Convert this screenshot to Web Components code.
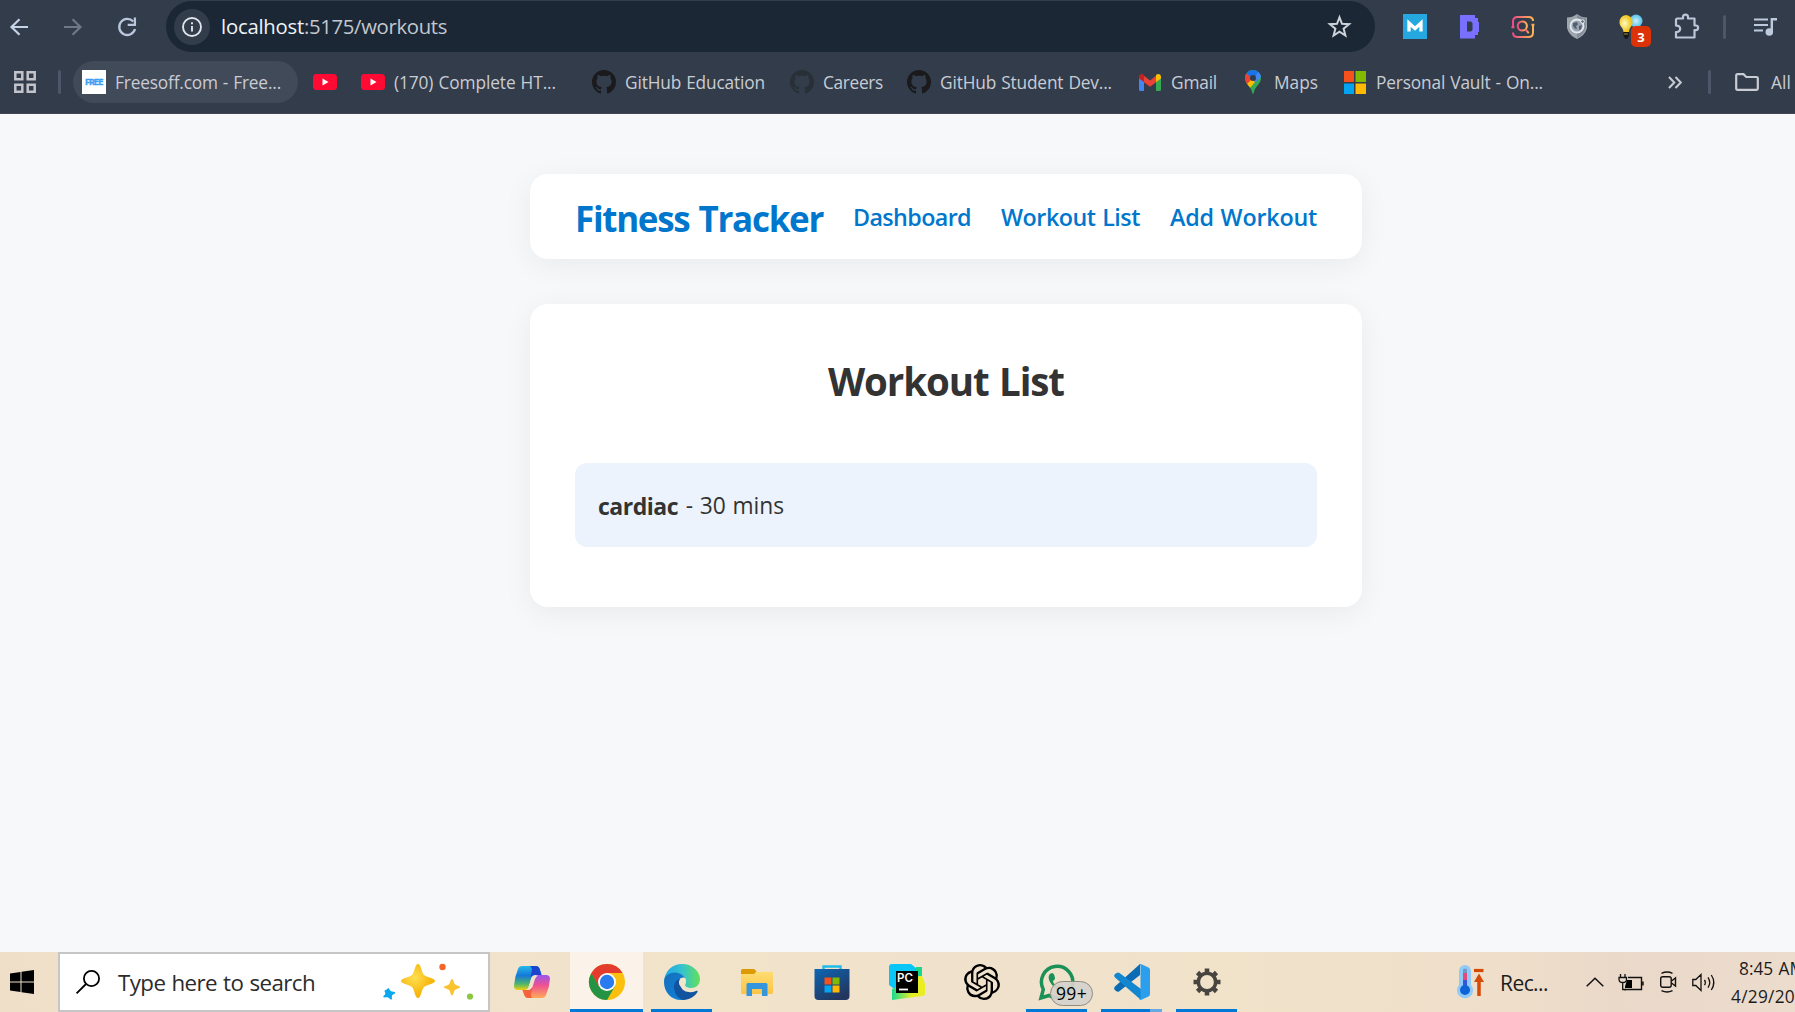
<!DOCTYPE html>
<html lang="en">
<head>
<meta charset="utf-8">
<title>Fitness Tracker</title>
<style>
html,body{margin:0;height:100%;overflow:hidden;background:#f6f8fa}
body{font-family:"Open Sans","Noto Sans",sans-serif}
</style>
</head>
<body>
<desktop-screen></desktop-screen>
<script>
const GH='<path fill="currentColor" d="M12 0C5.37 0 0 5.37 0 12c0 5.31 3.435 9.795 8.205 11.385.6.105.825-.255.825-.57 0-.285-.015-1.23-.015-2.235-3.015.555-3.795-.735-4.035-1.41-.135-.345-.72-1.41-1.23-1.695-.42-.225-1.02-.78-.015-.795.945-.015 1.62.87 1.845 1.23 1.08 1.815 2.805 1.305 3.495.99.105-.78.42-1.305.765-1.605-2.67-.3-5.46-1.335-5.46-5.925 0-1.305.465-2.385 1.23-3.225-.12-.3-.54-1.53.12-3.18 0 0 1.005-.315 3.3 1.23.96-.27 1.98-.405 3-.405s2.04.135 3 .405c2.295-1.56 3.3-1.23 3.3-1.23.66 1.65.24 2.88.12 3.18.765.84 1.23 1.905 1.23 3.225 0 4.605-2.805 5.625-5.475 5.925.435.375.81 1.095.81 2.22 0 1.605-.015 2.895-.015 3.3 0 .315.225.69.825.57A12.02 12.02 0 0 0 24 12c0-6.63-5.37-12-12-12z"/>';
/* name: [width, height, markup] */
const ICONS={
back:[18,18,'<path d="M18 9H2M9.5 1.2 1.5 9l8 7.8" fill="none" stroke="#c6d2e6" stroke-width="2.2"/>'],
forward:[18,18,'<path d="M0 9h16M8.5 1.2l8 7.8-8 7.8" fill="none" stroke="#6f7885" stroke-width="2.2"/>'],
reload:[20,20,'<path d="M16.2 4.6A8 8 0 1 0 18 12" fill="none" stroke="#b9c6dc" stroke-width="2.3"/><path d="M17.9.5v7.3h-7.2" fill="none" stroke="#b9c6dc" stroke-width="2.3"/>'],
info:[36,36,'<circle cx="18" cy="18" r="18" fill="#323c4b"/><circle cx="18" cy="18" r="9" fill="none" stroke="#dfe3ec" stroke-width="1.9"/><path d="M18 17v5.6M18 13.2v2" stroke="#dfe3ec" stroke-width="1.9"/>'],
star:[23,23,'<path d="m11.5 2.3 2.5 6.5 7.1.4-5.5 4.4 1.8 7-5.9-3.9-5.9 3.9 1.8-7L1.900 9.2l7.100-.4z" fill="none" stroke="#ced2d9" stroke-width="2"/>'],
mext:[24,25,'<path fill="#25a8df" d="M0 0h24v25H0z"/><path d="M6 17.500V9l6 5.500L18 9v8.500" fill="none" stroke="#fff" stroke-width="3.300"/>'],
dext:[19,25,'<path fill="#7a70ff" fill-rule="evenodd" d="M1.500 1H15v3h3v4h1v10h-1v3h-3v3.500H0V1zM7 7.500v10h4l1.500-1.500V9L11 7.500z"/>'],
lens:[24,24,'<defs><linearGradient id="g"><stop stop-color="#ee4c82"/><stop offset="1" stop-color="#fbb652"/></linearGradient></defs><g fill="none" stroke="url(#g)" stroke-width="2"><path d="M2 12V6.500Q2 2 6.500 2h11Q22 2 22 6M22 10v7.500q0 4.500-4.500 4.500h-11Q2 22 2 17.500"/><path d="M.4 12.300h3M20.400 9.800h3"/><circle cx="11.300" cy="11" r="4.600"/><path d="m14.500 14.500 3.200 3.700"/></g>'],
shield:[20,25,'<path d="M10 0q4.500 3.500 10 3.500V14q-2 7.500-10 11Q2 21.500 0 14V3.500Q5.500 3.500 10 0z" fill="#9da5ad"/><path d="M10 1v23q7.500-4 9-11V4.500Q14 4 10 1z" fill="#858e98"/><circle cx="10" cy="12" r="6.500" fill="#9aa3b0" stroke="#e2e8f0" stroke-width="1.800"/><path d="m6 9 4-1 1 2.500-2 1.500 1 3-2-.5-2-2.500zM12 12l3-1-1 4-2 1z" fill="#525f6f"/><circle cx="15.500" cy="7.500" r="1.800" fill="#637080" stroke="#fff" stroke-width=".8"/>'],
bulb:[34,34,'<defs><radialGradient id="a" cx=".4"><stop stop-color="#fffbc4"/><stop offset="1" stop-color="#f2c51c"/></radialGradient><radialGradient id="b"><stop stop-color="#c7f2ff"/><stop offset="1" stop-color="#5abde5"/></radialGradient></defs><circle cx="17" cy="7" r="6.500" fill="url(#b)"/><path d="M7 1a6.800 7 0 0 1 6.500 8c-.5 4-3 4-3.500 9H4.500C4 13 1 13 .5 9A6.800 7 0 0 1 7 1z" fill="url(#a)"/><path d="M4.500 18H10v4l-2 3H6.500l-2-3z" fill="#171717"/><path d="M5 20h4" stroke="#a98e35"/>'],
puzzle:[25,26,'<path d="M3 5.500h6V4.200a2.500 2.500 0 0 1 5 0v1.300h6.500v7h1.300a2.300 2.300 0 0 1 0 4.600h-1.300V24.500H2V19h1a3.200 3.200 0 0 0 0-6.400H2V6.500z" fill="none" stroke="#bcc6d9" stroke-width="2.200" stroke-linejoin="round"/>'],
music:[23,18,'<path d="M0 1.500h14M0 7h14M0 12.500h9" stroke="#bdc9dd" stroke-width="2.200"/><path d="M17.800 14V1.300H23" fill="none" stroke="#bdc9dd" stroke-width="2.400"/><circle cx="15.300" cy="14" r="3.800" fill="#bdc9dd"/>'],
apps:[22,22,'<g fill="none" stroke="#c3c4ca" stroke-width="2.500"><path d="M1.300 1.300h7v7h-7zM13.700 1.300h7v7h-7zM1.300 13.700h7v7h-7zM13.700 13.700h7v7h-7z"/></g>'],
sep:[3,24,'<rect width="3" height="24" rx="1.500" fill="#4c586a"/>'],
yt:[24,16,'<rect width="24" height="16" rx="3.500" fill="#ff0a33"/><path fill="#fff" d="m9.500 4.500 6 3.500-6 3.500z"/>'],
gh:[24,24,GH],
gmail:[22,17,'<path fill="#4285f4" d="M0 3h5v14H1.500Q0 17 0 15.500z"/><path fill="#34a853" d="M17 3h5v12.500q0 1.500-1.500 1.500H17z"/><path fill="#ea4335" d="m4 1 7 5.500L18 1v6.500l-7 5.300-7-5.300z"/><path fill="#c5221f" d="M0 3C0 0 3-.8 5 .9V8L0 4.500z"/><path fill="#fbbc04" d="M22 3c0-3-3-3.800-5-2.100V8l5-3.500z"/>'],
maps:[16,24,'<defs><clipPath id="p"><path d="M8 0a8 8 0 0 1 8 8c0 6-6 8-7.300 15q-.7 2-1.400 0C6 16 0 14 0 8a8 8 0 0 1 8-8z"/></clipPath></defs><g clip-path="url(#p)"><path fill="#34a853" d="M0 0h16v24H0z"/><path fill="#fbbc04" d="M0 14 8 5l4 5-8 9H0z"/><path fill="#ea4335" d="M0 3 8 8l-7 7-3-5z"/><path fill="#4285f4" d="M8 8 14 0l4 5-8 8z"/><path fill="#1a73e8" d="M1 3Q7-4 14 1L8 9z"/></g><circle cx="8" cy="8" r="3" fill="#323c4b"/>'],
ms:[22,23,'<path fill="#f6511d" d="M0 0h10v11H0z"/><path fill="#80bb01" d="M11.500 0H22v11H11.500z"/><path fill="#02a4ef" d="M0 12.500h10V23H0z"/><path fill="#ffb901" d="M11.500 12.500H22V23H11.500z"/>'],
more:[14,13,'<path d="m1 1 5.300 5.500L1 12M7.500 1l5.300 5.500L7.500 12" fill="none" stroke="#c9ccd3" stroke-width="2"/>'],
folder:[24,18,'<path d="M1.200 2.500q0-1.300 1.300-1.300h6L11.300 4h10.200q1.300 0 1.300 1.300v10.200q0 1.300-1.300 1.300h-19q-1.300 0-1.300-1.300z" fill="none" stroke="#c9ccd3" stroke-width="2.200"/>'],
win:[24,24,'<path d="M0 3.400 10.500 2v9.500H0zM11.500 1.800 24 0v11.500H11.500zM0 12.500h10.500V22L0 20.600zM11.500 12.500H24V24l-12.500-1.800z"/>'],
search:[24,24,'<circle cx="15.500" cy="8.500" r="7.600" fill="none" stroke="#000" stroke-width="1.800"/><path d="M10 14 .6 23.400" stroke="#000" stroke-width="1.800"/>'],
spark:[92,38,'<defs><radialGradient id="y" cx=".4" cy=".4"><stop stop-color="#ffdf50"/><stop offset="1" stop-color="#f7b60c"/></radialGradient></defs><path d="M36 1c3 0 3.500 8.500 6 11 2.500 2.400 11 3 11 6s-8.500 3.600-11 6c-2.500 2.500-3 11-6 11s-3.500-8.500-6-11c-2.500-2.400-11-3-11-6s8.500-3.600 11-6c2.500-2.500 3-11 6-11z" fill="url(#y)"/><path d="M70 16c1.500 0 1.700 4 3 5.300C74.300 22.500 78 23 78 24.200s-3.700 1.500-5 2.800c-1.300 1.200-1.500 5.500-3 5.500s-1.700-4.300-3-5.500c-1.300-1.300-5-1.600-5-2.800s3.700-1.700 5-2.900C68.300 20 68.500 16 70 16z" fill="#fbc32f"/><path d="M6 25c1-.5 1.800 2.700 3 3.300s4 .2 4.200 1.400-2.700 1.500-3.200 2.800.5 3.800-.6 4.200-2.500-2.200-3.800-2.400-3.800.6-4.300-.3 1.700-2 2-3.200-1.500-2.900-.5-3.500 2.200-.3 3.200-2.300z" fill="#08a9ef"/><circle cx="60.500" cy="4" r="3.200" fill="#f3652b"/><circle cx="88" cy="33.500" r="3.100" fill="#8cc83c"/>'],
copilot:[36,34,'<defs><linearGradient id="c1" x2="0" y2="1"><stop stop-color="#25b8e8"/><stop offset=".4" stop-color="#1478d8"/><stop offset=".75" stop-color="#4fb66b"/><stop offset="1" stop-color="#f2d10c"/></linearGradient><linearGradient id="c2" x2="0" y2="1"><stop stop-color="#9a55f0"/><stop offset=".45" stop-color="#ee5290"/><stop offset="1" stop-color="#ffab55"/></linearGradient></defs><path d="M8 1h14q3 0 4 4l1.500 5H21q-3 0-4 4l-2 7q-1 4-4 4H4q-4 0-4-4Q.5 12 4 4q1-3 4-3z" fill="url(#c1)"/><path d="M15 1h7q3 0 4 4l1.500 5H21q-3 0-4.500 2L18 5q-.5-4-3-4z" fill="#1b45ce"/><path d="M28 33H14q-3 0-4-4l-1.500-4H14q3 0 4-4l2-7q1-4 4-4h8q4 0 4 4-.5 8-4 16-1 3-4 3z" fill="url(#c2)"/><path d="M19 33h-5q-3 0-4-4l-1.500-4H14q3 0 4.500-2L17 29q0 4 2 4z" fill="#f4623c"/><path d="m17.500 13 3.500-2.500h3q-2 1-3 3.500l-2.500 8-3.500 3h-3q2-1 3-4z" fill="#f1e3cb"/>'],
chrome:[36,36,'<circle cx="18" cy="18" r="18" fill="#fbbf0d"/><path d="M2.400 9A18 18 0 0 1 33.600 9H18l-7.800 13.500z" fill="#e33b2e"/><path d="M2.400 9a18 18 0 0 0 15.600 27l7.800-13.500H10.200z" fill="#259344"/><path d="M2.400 9 10.200 22.500 18 9z" fill="#e33b2e"/><circle cx="18" cy="18" r="9" fill="#fff"/><circle cx="18" cy="18" r="7.200" fill="#2a7af0"/>'],
edge:[36,36,'<defs><linearGradient id="e1"><stop stop-color="#20a4e8"/><stop offset=".5" stop-color="#34c3cf"/><stop offset="1" stop-color="#63e05a"/></linearGradient><linearGradient id="e2" y2="1"><stop stop-color="#176fb9"/><stop offset="1" stop-color="#0a84e0"/></linearGradient></defs><path d="M0 17C1 7 8 0 18 0c11 0 18 8 18 15 0 6-4 9-9 9-4 0-7-1.500-5.500-4C23 14 17 8 11 9c-6 1-9 3-11 8z" fill="url(#e1)"/><path d="M0 18C0 12 5 8.500 11 8.500c6 0 10 4 11 8-2-4-9-3-9 4C13 27 18 32 25 32c-2 3-5 4-8 4C7 36 0 28 0 18z" fill="url(#e2)"/><path d="M15 15c-3 1.500-5 4-5 8 0 7 5 12 9 13 7 0 12-4 14.500-8 .5-1-.5-1.500-1.500-1-6 2.500-13 1-15-4-1-3-1-6 1-8z" fill="#11539e"/><path d="M19 13.500c2-.5 3.500 1.500 3 4-.5 2.500-2 4-.5 5 1 .8 3 1.500 5 1.500-3 1.500-9 1-11-3-1.500-4 .5-7 3.500-7.500z" fill="#f1e5ce"/>'],
files:[32,27,'<defs><linearGradient id="f" x2="0" y2="1"><stop stop-color="#ffdc72"/><stop offset="1" stop-color="#fbc447"/></linearGradient></defs><path d="M0 1.500Q0 0 1.500 0H13l2.500 2L13 6H0z" fill="#dc9a05"/><path d="M0 5h13l3-2.300h14.500Q32 2.700 32 4v19.500q0 1.500-1.500 1.500h-29Q0 25 0 23.500z" fill="url(#f)"/><path d="M5.500 27V15.500q0-1.500 1.500-1.500h18q1.500 0 1.500 1.500V27H21v-7H11v7z" fill="#3596dd"/>'],
store:[36,36,'<defs><linearGradient id="s" x2=".6" y2="1"><stop stop-color="#0d66b4"/><stop offset="1" stop-color="#23365f"/></linearGradient></defs><path d="M9.500 7V2.500h17V7" fill="none" stroke="#20bdea" stroke-width="2.400"/><path d="M.5 5h35v27q0 4-4 4h-27q-4 0-4-4z" fill="url(#s)"/><path fill="#f6511d" d="M10.500 13.500h7v7h-7z"/><path fill="#80bb01" d="M18.500 13.500h7v7h-7z"/><path fill="#02a4ef" d="M10.500 21.500h7v7h-7z"/><path fill="#ffb901" d="M18.500 21.500h7v7h-7z"/>'],
pc:[36,36,'<defs><linearGradient id="q"><stop stop-color="#18d991"/><stop offset=".6" stop-color="#e8ee20"/></linearGradient></defs><path d="M0 3q0-3 3-3h19l5 4v20H4l-4-3z" fill="#08c7f6"/><path d="M27 3h6v9l-6 10z" fill="#18d78a"/><path d="M3 36V25l27-13h3l3 8v9q0 3-3 3z" fill="url(#q)"/><path d="M7 7h22v22H7z"/><path d="M10 25.500h9" stroke="#fff" stroke-width="1.800"/>'],
gpt:[36,36,'<g transform="scale(1.5)"><path d="M22.280 9.820a5.980 5.980 0 0 0-.51-4.910 6.050 6.050 0 0 0-6.510-2.900A6.070 6.070 0 0 0 4.980 4.180a5.980 5.980 0 0 0-4 2.900 6.050 6.050 0 0 0 .74 7.100 5.980 5.980 0 0 0 .51 4.910 6.050 6.050 0 0 0 6.510 2.900A5.980 5.980 0 0 0 13.260 24a6.060 6.060 0 0 0 5.770-4.210 5.990 5.990 0 0 0 4-2.900 6.060 6.060 0 0 0-.75-7.070zm-9.020 12.610a4.480 4.480 0 0 1-2.880-1.040l.14-.08 4.780-2.760a.8.8 0 0 0 .39-.68v-6.740l2.020 1.170a.07.07 0 0 1 .04.05v5.580a4.500 4.500 0 0 1-4.490 4.500zm-9.660-4.130a4.470 4.470 0 0 1-.54-3.010l.14.09 4.780 2.760a.77.77 0 0 0 .78 0l5.840-3.370v2.330a.08.08 0 0 1-.03.06L9.740 19.950a4.500 4.500 0 0 1-6.140-1.650zM2.340 7.900a4.490 4.490 0 0 1 2.370-1.970v5.680a.77.77 0 0 0 .39.680l5.810 3.350-2.020 1.170a.08.08 0 0 1-.07 0l-4.830-2.790A4.500 4.500 0 0 1 2.340 7.870zm16.600 3.860-5.840-3.390L15.120 7.200a.08.08 0 0 1 .07 0l4.830 2.790a4.490 4.490 0 0 1-.68 8.100v-5.680a.79.79 0 0 0-.4-.65zm2.010-3.020-.14-.09-4.770-2.780a.78.78 0 0 0-.79 0L9.410 9.230V6.900a.07.07 0 0 1 .03-.06l4.830-2.790a4.500 4.500 0 0 1 6.680 4.660zM8.310 12.860l-2.020-1.160a.08.08 0 0 1-.04-.06V6.070a4.500 4.500 0 0 1 7.380-3.450l-.14.08L8.700 5.460a.8.8 0 0 0-.39.68zm1.100-2.360 2.600-1.500 2.610 1.500v3l-2.600 1.500-2.610-1.500z"/></g>'],
wa:[36,36,'<path d="M2 34l2.300-8.500A15.700 15.700 0 1 1 10 31.500z" fill="none" stroke="#1b9158" stroke-width="3.500"/><path d="M13 9c-4 1-4 5-2 9s6 7 11 9l4-2c1-2 0-3-5-4l-3 1c-2-1-4-3-4-5l2-2c0-2-1-6-3-6z" fill="#1b9158"/>'],
vsc:[36,36,'<path d="M26 0v11L5 27.500q-1.500.8-3-.5L.5 25.500q-1-1.500.5-3z" fill="#0b6cb5"/><path d="M1 13.500q-1.500-1.500-.5-3L2.500 9q1.500-1.200 3 0L27 25v11z" fill="#1287d0"/><path d="M26 0q1 0 2 .5l6.500 3q1.500.8 1.500 2.500v24q0 1.700-1.500 2.500l-6.500 3q-1.500.7-3-.3 1.500.3 1.500-1.500V2q0-1.500-1.500-1.500z" fill="#2c9eee"/>'],
gear:[28,28,'<circle cx="14" cy="14" r="8.700" fill="none" stroke="#484541" stroke-width="3.600"/><path d="M14 .5V5M14 23v4.500M.5 14H5M23 14h4.500M4.500 4.500l3.200 3.200M20.300 20.300l3.200 3.200M4.500 23.500l3.200-3.200M20.300 7.700l3.200-3.200" stroke="#484541" stroke-width="4.600"/>'],
thermo:[28,34,'<path d="M8 0a6 6 0 0 1 6 6v14a8 8 0 1 1-12 0V6a6 6 0 0 1 6-6z" fill="#90caf8"/><path d="M6 7q0-3 2-3t2 3v14H6z" fill="#e04b7b"/><path d="M6 5q0-1.500 2-1.500T10 5v3H6z" fill="#6b9cc6"/><path d="M6 15h4v8H6z" fill="#3657d5"/><circle cx="8" cy="25" r="5" fill="#0e62d6"/><path d="M17 5.500h9.500" stroke="#d64a08" stroke-width="3.200"/><path d="M22 31V12" stroke="#d64a08" stroke-width="3.500"/><path d="m17 17 5-8.500 5 8.500z" fill="#d64a08"/>'],
up:[18,10,'<path d="m.7 9.300 8.300-8 8.300 8" fill="none" stroke="#111" stroke-width="1.500"/>'],
battery:[25,18,'<path d="M9 4.500h13.500v12H5M24 8.500v4" fill="none" stroke="#111" stroke-width="1.400"/><path d="M8 7h5v8H5.500z"/><path d="M1.500 1v3M6 1v3M0 4.500h7.500v2q0 3-3.700 3T0 6.500zM3.700 9.500v7H7" fill="#eadccb" stroke="#111" stroke-width="1.300"/>'],
camera:[17,22,'<rect x=".7" y="5.700" width="10.500" height="10.600" rx="2" fill="none" stroke="#111" stroke-width="1.400"/><path d="m11.500 10 4-3v8l-4-3M1.500 2.300q5.500-2.600 11 0M1.500 19.700q5.500 2.600 11 0" fill="none" stroke="#111" stroke-width="1.400"/>'],
sound:[23,19,'<path d="M.8 6.500h3L9 1.500v16l-5.200-5h-3zM12.500 6.800q1.700 2.700 0 5.400M16 4.300q3.400 5.200 0 10.400M19.300 2q5 7.500 0 15" fill="none" stroke="#111" stroke-width="1.300"/>']
};
class UiIcon extends HTMLElement{
  connectedCallback(){
    const [w,h,m]=ICONS[this.getAttribute('name')],g=this.getAttribute('g')||0,y=this.getAttribute('y')||0;
    this.attachShadow({mode:'open'}).innerHTML=`<style>:host{display:block;flex:none;margin-left:${g}px;margin-top:${y*2}px;width:${w}px;height:${h}px}svg{display:block;overflow:visible}</style><svg width="${w}" height="${h}" viewBox="0 0 ${w} ${h}">${m}</svg>`;
  }
}
customElements.define('ui-icon',UiIcon);

/* A single line of text whose tracking is tuned to fill a given width. */
class UiText extends HTMLElement{
  connectedCallback(){
    const a=n=>this.getAttribute(n),w=+a('w'),g=a('g')||0,y=a('y')||0;
    this.attachShadow({mode:'open'}).innerHTML=`<style>:host{display:block;flex:none;margin-left:${g}px;margin-top:${y*2}px;width:${w}px;white-space:pre;font-size:${a('size')}px;font-weight:${a('weight')||400};line-height:1.4}span{display:inline-block;word-spacing:.04em}</style><span><slot></slot></span>`;
    const s=this.shadowRoot.querySelector('span');
    s.style.letterSpacing=(w-s.getBoundingClientRect().width)/this.textContent.length+'px';
  }
}
customElements.define('ui-text',UiText);

const define=(name,css,html)=>customElements.define(name,class extends HTMLElement{
  connectedCallback(){
    if(this.shadowRoot)return;
    const t=document.createElement('template');
    t.innerHTML=`<style>*{box-sizing:border-box}:host{box-sizing:border-box}${css}</style>${html}`;
    this.attachShadow({mode:'open'}).append(t.content.cloneNode(true));
  }
});

define('address-bar',`:host{display:flex;align-items:center;flex:none;width:1209px;height:51px;margin-left:29px;padding-left:8px;border-radius:25.500px;background:#1c2736;color:#c3c7ce}.host{color:#f0f3f7}`,
`<ui-icon name="info"></ui-icon><ui-text class="host" g="11" w="83" size="20.300">localhost</ui-text><ui-text w="143" size="20.300">:5175/workouts</ui-text><ui-icon name="star" g="881"></ui-icon>`);

define('extension-badge',`:host{display:block;position:relative;flex:none;width:34px;height:25px;margin-left:32px}
b{position:absolute;left:12px;top:12px;width:20px;height:21px;border-radius:5px;background:#dc3207;color:#fff;font-size:13px;line-height:22px;text-align:center}ui-icon{position:absolute}`,
`<ui-icon name="bulb"></ui-icon><b>3</b>`);

define('browser-toolbar',`:host{display:flex;align-items:center;height:52px;padding:1px 0 0 10px}`,
`<ui-icon name="back" y=".5"></ui-icon><ui-icon name="forward" g="36" y=".5"></ui-icon><ui-icon name="reload" g="35" y=".5"></ui-icon>
<address-bar></address-bar>
<ui-icon name="mext" g="28"></ui-icon><ui-icon name="dext" g="33"></ui-icon><ui-icon name="lens" g="32"></ui-icon><ui-icon name="shield" g="32"></ui-icon><extension-badge></extension-badge><ui-icon name="puzzle" g="21" y="-.5"></ui-icon><ui-icon name="sep" g="24"></ui-icon><ui-icon name="music" g="28"></ui-icon>`);

define('tab-chip',`:host{display:flex;align-items:center;flex:none;width:225px;height:42px;margin-left:12px;padding-left:9px;border-radius:21px;background:#414a59}
i{width:24px;height:24px;background:#fff;color:#3a9df5;font:bold 8px/24px Inter,sans-serif;text-align:center;letter-spacing:-.5px;-webkit-text-stroke:.4px #3a9df5}`,
`<i>FREE</i><ui-text g="9" w="166" size="17.300" y="1">Freesoff.com - Free...</ui-text>`);

define('bookmarks-bar',`:host{display:flex;align-items:center;height:62px;padding:0 0 1px 14px;border-bottom:1px solid #444453;color:#c9ccd3}.dark{color:#1a191b}.dim{color:#292f36}`,
`<ui-icon name="apps"></ui-icon><ui-icon name="sep" g="22"></ui-icon><tab-chip></tab-chip>
<ui-icon name="yt" g="15"></ui-icon><ui-icon name="yt" g="24"></ui-icon><ui-text g="9" w="162" size="17.300" y="1">(170) Complete HT...</ui-text>
<ui-icon class="dark" name="gh" g="36"></ui-icon><ui-text g="9" w="140" size="17.300" y="1">GitHub Education</ui-text>
<ui-icon class="dim" name="gh" g="25"></ui-icon><ui-text g="9" w="60" size="17.300" y="1">Careers</ui-text>
<ui-icon class="dark" name="gh" g="24"></ui-icon><ui-text g="9" w="172" size="17.300" y="1">GitHub Student Dev...</ui-text>
<ui-icon name="gmail" g="27"></ui-icon><ui-text g="10" w="46" size="17.300" y="1">Gmail</ui-text>
<ui-icon name="maps" g="28"></ui-icon><ui-text g="13" w="44" size="17.300" y="1">Maps</ui-text>
<ui-icon name="ms" g="26"></ui-icon><ui-text g="10" w="167" size="17.300" y="1">Personal Vault - On...</ui-text>
<ui-icon name="more" g="125"></ui-icon><ui-icon name="sep" g="26"></ui-icon><ui-icon name="folder" g="24"></ui-icon><ui-text g="12" w="20" size="17.300" y="1">All</ui-text>`);

define('browser-chrome',`:host{display:block;flex:none;height:114px;background:#323c4b}`,`<browser-toolbar></browser-toolbar><bookmarks-bar></bookmarks-bar>`);

define('app-card',`:host{display:block;width:832px;background:#fff;border-radius:18px;box-shadow:0 6px 30px rgba(0,0,0,.06)}`,`<slot></slot>`);

define('app-nav',`:host{display:flex;align-items:center;height:85px;padding:0 45px;color:#0077cc}`,
`<ui-text w="248" size="35" weight="700" y="1.500">Fitness Tracker</ui-text><ui-text g="30" w="118" size="23.300" weight="600" y="1">Dashboard</ui-text><ui-text g="30" w="139" size="23.300" weight="600" y="1">Workout List</ui-text><ui-text g="30" w="147" size="23.300" weight="600" y="1">Add Workout</ui-text>`);

define('workout-item',`:host{display:flex;align-items:center;height:84px;padding:0 23px;border-radius:12px;background:#ecf3fc}`,`<slot></slot>`);

define('workout-list',`:host{display:flex;flex-direction:column;height:303px;padding:51px 45px 60px;color:#333}
header{display:flex;justify-content:center;height:56px;margin-bottom:52px}`,
`<header><ui-text w="236" size="38.500" weight="700">Workout List</ui-text></header>
<workout-item><ui-text w="80" size="23" weight="700" y="1">cardiac</ui-text><ui-text g="1" w="105" size="22.800" y="1" style="word-spacing:2px"> - 30 mins</ui-text></workout-item>`);

/* The page's own viewport extends past the right edge of the screen. */
define('app-page',`:host{display:flex;flex-direction:column;align-items:center;gap:45px;flex:1;width:1892px;padding-top:60px;background:#f6f8fa}`,
`<app-card><app-nav></app-nav></app-card><app-card><workout-list></workout-list></app-card>`);

define('search-box',`:host{display:flex;align-items:center;flex:none;width:432px;height:60px;margin-left:24px;padding-left:16px;border:2px solid #c6c6c7;background:#fff;color:#2b2b2b}`,
`<ui-icon name="search"></ui-icon><ui-text g="18" w="197" size="22.300" y="1">Type here to search</ui-text><ui-icon name="spark" g="67"></ui-icon>`);

define('task-button',`:host{display:flex;position:relative;flex:none;align-items:center;justify-content:center;width:75px;height:60px}
:host([active]){background:linear-gradient(#fbf3ea,#fbf3ea) center/73px 100% no-repeat}
:host([open])::after{content:"";position:absolute;left:7px;right:7px;bottom:0;height:3px;background:#0078d7}
:host([active])::after{left:1px;right:1px}
:host([split])::after{background:linear-gradient(90deg,#0078d7 49px,#66aae5 49px)}`,`<slot></slot>`);

define('count-badge',`:host{position:absolute;left:31px;top:29px;width:43px;height:25px;border:1.500px solid #918b80;border-radius:13px;background:rgba(213,211,204,.93);color:#000;display:flex;align-items:center;justify-content:center}`,`<ui-text w="31" size="17.500" weight="500">99+</ui-text>`);
define('tile-label',`:host{position:absolute;left:28px;top:19px;color:#fff;font:600 11.500px/14px Inter,sans-serif}`,`<slot></slot>`);

define('task-clock',`:host{display:flex;flex-direction:column;flex:none;width:66px;height:60px;margin-left:14px;padding-top:5px;color:#1c1c1c;overflow:hidden}ui-text{height:28px}`,
`<ui-text g="10" w="66" size="17.300">8:45 AM</ui-text><ui-text g="2" w="64" size="17.300">4/29/20</ui-text>`);

define('task-bar',`:host{display:flex;align-items:center;flex:none;height:60px;background:linear-gradient(90deg,#efdfc8 0,#f1e2cc 25%,#f1e4ca 40%,#f0e1cc 53%,#f1e3ca 68%,#efdfca 83%,#ead9c9 90%,#ecdccd 100%);padding-left:10px}
.apps{display:flex;margin-left:4px}.tray{display:flex;align-items:center;flex:1;margin-left:213px;color:#1c1c1c}`,
`<ui-icon name="win"></ui-icon><search-box></search-box>
<div class="apps"><task-button><ui-icon name="copilot"></ui-icon></task-button><task-button active open><ui-icon name="chrome"></ui-icon></task-button><task-button open><ui-icon name="edge"></ui-icon></task-button><task-button><ui-icon name="files"></ui-icon></task-button><task-button><ui-icon name="store"></ui-icon></task-button><task-button><ui-icon name="pc"></ui-icon><tile-label>PC</tile-label></task-button><task-button><ui-icon name="gpt"></ui-icon></task-button><task-button open><ui-icon name="wa"></ui-icon><count-badge></count-badge></task-button><task-button open split><ui-icon name="vsc"></ui-icon></task-button><task-button open><ui-icon name="gear"></ui-icon></task-button></div>
<div class="tray"><ui-icon name="thermo"></ui-icon><ui-text g="15" w="48" size="21" y="1.500">Rec...</ui-text><ui-icon name="up" g="38" y="-.5"></ui-icon><ui-icon name="battery" g="15"></ui-icon><ui-icon name="camera" g="16"></ui-icon><ui-icon name="sound" g="15"></ui-icon><task-clock></task-clock></div>`);

define('desktop-screen',`:host{display:flex;flex-direction:column;width:1795px;height:1012px;overflow:hidden}`,`<browser-chrome></browser-chrome><app-page></app-page><task-bar></task-bar>`);
</script>
</body>
</html>
